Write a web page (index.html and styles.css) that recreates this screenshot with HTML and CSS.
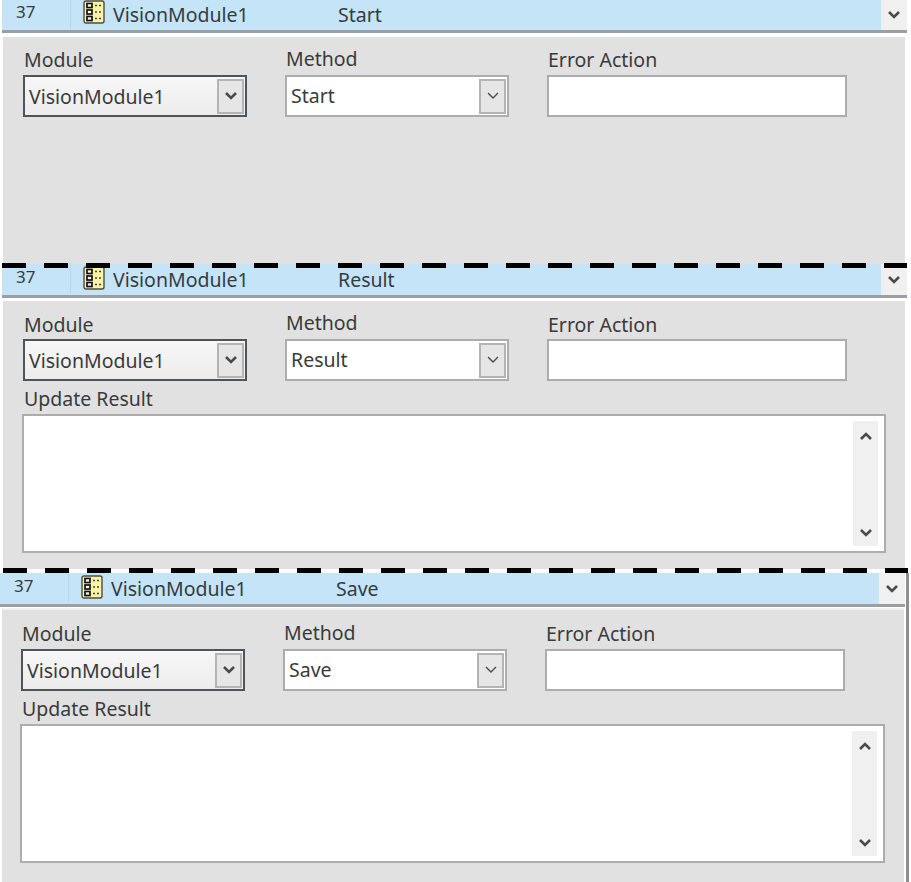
FILE: index.html
```html
<!DOCTYPE html>
<html lang="en">
<head>
    <meta charset="UTF-8">
    <meta name="viewport" content="width=device-width, initial-scale=1.0">
    <title>VisionModule steps</title>
    <link rel="stylesheet" href="styles.css">
</head>
<body>
    <svg class="defs" aria-hidden="true">
        <symbol id="chev-bold" viewBox="0 0 14 10"><polyline points="2,2 7,7 12,2" fill="none" stroke="currentColor" stroke-width="2.6"/></symbol>
        <symbol id="chev-thin" viewBox="0 0 14 10"><polyline points="2,2 7,7 12,2" fill="none" stroke="currentColor" stroke-width="1.4"/></symbol>
        <symbol id="chev-up" viewBox="0 0 14 10"><polyline points="2,8 7,3 12,8" fill="none" stroke="currentColor" stroke-width="2.6"/></symbol>
        <symbol id="module-icon" viewBox="0 0 22 24">
            <rect x="1" y="1" width="20" height="22" rx="2" fill="#faf3a6" stroke="#4d4d3c" stroke-width="1.4"/>
            <rect x="4" y="3.5" width="5" height="4" fill="#fff" stroke="#111" stroke-width="1.7"/>
            <rect x="4" y="10" width="5" height="4" fill="#fff" stroke="#111" stroke-width="1.7"/>
            <rect x="4" y="16.5" width="5" height="4" fill="#fff" stroke="#111" stroke-width="1.7"/>
            <path d="M12 5.5h2M16 5.5h2M12 12h2M16 12h2M12 18.5h2M16 18.5h2" stroke="#444" stroke-width="1.5"/>
        </symbol>
    </svg>

    <section class="step step-first">
        <div class="step-head">
            <span class="step-no">37</span>
            <svg class="step-icon"><use href="#module-icon"/></svg>
            <span class="step-name">VisionModule1</span>
            <span class="step-method">Start</span>
            <span class="step-toggle"><svg class="chev"><use href="#chev-bold"/></svg></span>
        </div>
        <div class="panel">
            <div class="fields">
                <div class="field">
                    <label>Module</label>
                    <div class="combo combo-focus"><span>VisionModule1</span><i class="combo-btn"><svg class="chev"><use href="#chev-bold"/></svg></i></div>
                </div>
                <div class="field field-method">
                    <label>Method</label>
                    <div class="combo"><span>Start</span><i class="combo-btn"><svg class="chev"><use href="#chev-thin"/></svg></i></div>
                </div>
                <div class="field field-error">
                    <label>Error Action</label>
                    <div class="combo"></div>
                </div>
            </div>
        </div>
    </section>

    <section class="step step-second">
        <div class="dashes"></div>
        <div class="step-head">
            <span class="step-no">37</span>
            <svg class="step-icon"><use href="#module-icon"/></svg>
            <span class="step-name">VisionModule1</span>
            <span class="step-method">Result</span>
            <span class="step-toggle"><svg class="chev"><use href="#chev-bold"/></svg></span>
        </div>
        <div class="panel">
            <div class="fields">
                <div class="field">
                    <label>Module</label>
                    <div class="combo combo-focus"><span>VisionModule1</span><i class="combo-btn"><svg class="chev"><use href="#chev-bold"/></svg></i></div>
                </div>
                <div class="field field-method">
                    <label>Method</label>
                    <div class="combo"><span>Result</span><i class="combo-btn"><svg class="chev"><use href="#chev-thin"/></svg></i></div>
                </div>
                <div class="field field-error">
                    <label>Error Action</label>
                    <div class="combo"></div>
                </div>
            </div>
            <label class="memo-label">Update Result</label>
            <div class="memo">
                <div class="memo-scroll">
                    <svg class="chev"><use href="#chev-up"/></svg>
                    <svg class="chev"><use href="#chev-bold"/></svg>
                </div>
            </div>
        </div>
    </section>

    <section class="step step-third">
        <div class="dashes"></div>
        <div class="step-head">
            <span class="step-no">37</span>
            <svg class="step-icon"><use href="#module-icon"/></svg>
            <span class="step-name">VisionModule1</span>
            <span class="step-method">Save</span>
            <span class="step-toggle"><svg class="chev"><use href="#chev-bold"/></svg></span>
        </div>
        <div class="panel">
            <div class="fields">
                <div class="field">
                    <label>Module</label>
                    <div class="combo combo-focus"><span>VisionModule1</span><i class="combo-btn"><svg class="chev"><use href="#chev-bold"/></svg></i></div>
                </div>
                <div class="field field-method">
                    <label>Method</label>
                    <div class="combo"><span>Save</span><i class="combo-btn"><svg class="chev"><use href="#chev-thin"/></svg></i></div>
                </div>
                <div class="field field-error">
                    <label>Error Action</label>
                    <div class="combo"></div>
                </div>
            </div>
            <label class="memo-label">Update Result</label>
            <div class="memo">
                <div class="memo-scroll">
                    <svg class="chev"><use href="#chev-up"/></svg>
                    <svg class="chev"><use href="#chev-bold"/></svg>
                </div>
            </div>
        </div>
    </section>
</body>
</html>
```

FILE: styles.css
```css
html, body {
    margin: 0;
    height: 882px;
    overflow: hidden;
}
body {
    background-color: white;
    font-family: "Noto Sans", sans-serif;
    font-size: 19.5px;
    color: #3a3a3a;
}
.defs {
    display: none;
}
.chev {
    width: 14px;
    height: 10px;
    color: #4a4a4a;
    display: block;
}

.step {
    position: relative;
    padding-left: 2px;
    width: 905px;
}
.step-first {
    height: 264px;
}
.step-second {
    height: 309px;
}
.step-third {
    padding-left: 0;
    width: 906px;
    height: 309px;
    border-right: 3px solid #8f8f8f;
}
.dashes {
    position: absolute;
    left: 2px;
    top: -1px;
    width: 905px;
    height: 5px;
    background: repeating-linear-gradient(to right, #000 0, #000 24px, transparent 24px, transparent 42px);
}
.step-third .dashes {
    left: 3px;
    top: -5px;
}

.step-head {
    display: flex;
    align-items: center;
    height: 31px;
    background-color: #c6e4f8;
    border-bottom: 3px solid #9a9fa3;
    line-height: 28px;
    color: #343c42;
}
.step-first .step-head {
    height: 30px;
}
.step-third .step-head {
    width: 905px;
}
.step-no {
    width: 81px;
    padding-left: 14px;
    font-size: 17px;
    margin-top: -5px;
    box-sizing: border-box;
    height: 30px;
    background: linear-gradient(to right, transparent 68px, #b8d7ea 68px, #b8d7ea 69px, transparent 69px);
}
.step-icon {
    width: 22px;
    height: 24px;
    margin-right: 8px;
    margin-top: -6px;
}
.step-second .step-no,
.step-third .step-no,
.step-second .step-icon,
.step-third .step-icon {
    margin-top: -4px;
}
.step-name {
    width: 225px;
}
.step-method {
    flex: 1;
}
.step-toggle {
    width: 26px;
    align-self: stretch;
    background-color: #f0f0f0;
    display: flex;
    justify-content: center;
    align-items: center;
}

.panel {
    margin: 3px 0 0 1px;
    width: 902px;
    box-sizing: border-box;
    height: 268px;
    padding: 11px 0 0 20px;
    background-color: #e1e1e1;
}
.step-first .panel {
    margin-top: 4px;
    height: 227px;
}
.step-third .panel {
    margin-top: 1px;
    margin-left: 2px;
    height: 274px;
    border-top: 2px solid #f2f2f2;
    padding: 12px 0 0 19px;
}

.fields {
    display: flex;
    gap: 38px;
}
.field {
    width: 224px;
}
.field-error {
    width: 300px;
}
.field label,
.memo-label {
    display: block;
    height: 27px;
    line-height: 24px;
    padding-left: 1px;
}
.step-second .field label {
    line-height: 26px;
}
.field-method label,
.step-second .field-method label {
    line-height: 22px;
}
.combo {
    box-sizing: border-box;
    width: 100%;
    height: 42px;
    display: flex;
    align-items: center;
    justify-content: space-between;
    padding: 0 1px 0 4px;
    background-color: white;
    border: 2px solid #adadad;
}
.combo span {
    padding-bottom: 2px;
}
.combo-focus {
    border-color: #4f5458;
    background: linear-gradient(to bottom, #f7f7f7, #ececec);
}
.combo-focus span {
    padding-bottom: 0;
}
.combo-btn {
    width: 27px;
    height: 35px;
    box-sizing: border-box;
    border: 2px solid #b4b4b4;
    background-color: #e6e6e6;
    display: flex;
    align-items: center;
    justify-content: center;
}

.memo-label {
    height: 33px;
    line-height: 36px;
}
.memo {
    box-sizing: border-box;
    width: 864px;
    height: 139px;
    margin-left: -1px;
    background-color: white;
    border: 2px solid #adadad;
    display: flex;
    justify-content: flex-end;
    padding: 5px 6px 5px 0;
}
.step-third .memo {
    width: 865px;
}
.memo-scroll {
    width: 25px;
    background-color: #f0f0f0;
    display: flex;
    flex-direction: column;
    justify-content: space-between;
    align-items: center;
    padding: 10px 0 8px;
    box-sizing: border-box;
}
```
